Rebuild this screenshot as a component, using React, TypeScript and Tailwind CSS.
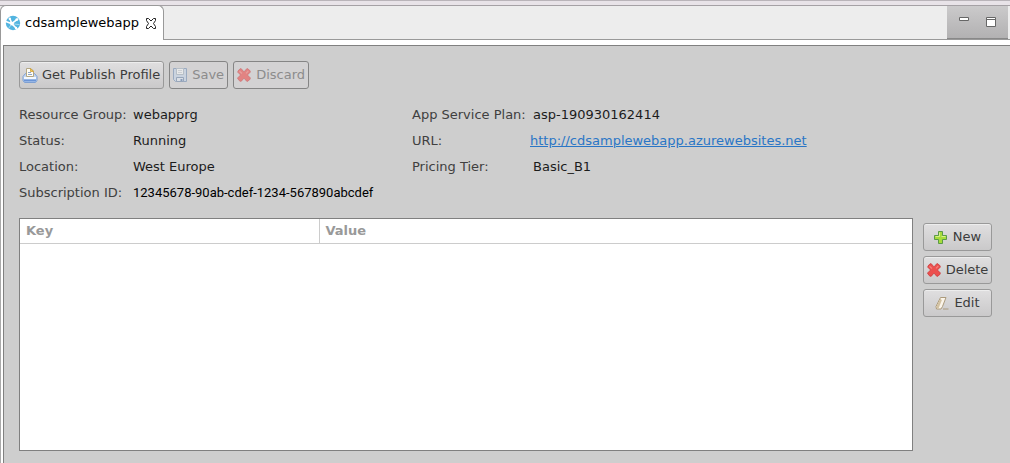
import React from 'react';

const AzureIcon = () => (
  <svg width="16" height="16" viewBox="0 0 16 16" aria-hidden="true">
    <circle cx="8" cy="8" r="7.2" fill="#52b4e0" />
    <path d="M4.800 3.500L6.800 8.500L13 3.800M.8 6.500L6.800 8.800L12 14" stroke="#fff" strokeWidth="1.600" fill="none" />
    <path d="M6.600 9L3.500 13.500M7 8.800L14.500 9.600" stroke="#c9e8f5" strokeWidth=".7" fill="none" />
    <circle cx="7" cy="8.600" r="1.900" fill="#fff" />
    <circle cx="4.800" cy="3.800" r="1.200" fill="#fff" />
    <circle cx="11.800" cy="4.600" r="1.400" fill="#fff" />
    <circle cx="11" cy="13" r="1.200" fill="#fff" />
  </svg>
);

const CloseIcon = () => (
  <svg width="12" height="11" viewBox="0 0 12 11" aria-hidden="true">
    <path d="M1.500 .5h2L6 3 8.500 .5h2v2L8.500 5.500l2 3v2h-2L6 8l-2.500 2.500h-2v-2L3.500 5.500l-2-3z" fill="#fff" stroke="#222" />
  </svg>
);

const PrinterIcon = () => (
  <svg width="16" height="16" viewBox="0 0 16 16" aria-hidden="true">
    <path d="M3.500 6.500h9l2.500 3v4l-1.500 2h-11L1 13.500v-4z" fill="#c3d7f3" stroke="#7fa0d2" />
    <path d="M4.500 9.500v-8h4.500l2.500 2.500v5.500z" fill="#fffdf5" stroke="#b3a784" />
    <path d="M8.500 1.500v3h3z" fill="#f0c95c" stroke="#d0a23a" strokeWidth=".8" />
    <path d="M6 5.500h3M6 7.500h4" stroke="#8fa6c9" />
    <path d="M2 10h12v2H2z" fill="#f3f8ff" />
    <path d="M1.800 13.500h12.400" stroke="#6a94d6" strokeWidth="2" />
  </svg>
);

const SaveIcon = () => (
  <svg width="16" height="16" viewBox="0 0 16 16" aria-hidden="true">
    <path d="M1.500 1.500h13v13h-11l-2-2z" fill="#c5d5e8" stroke="#7590b4" />
    <path d="M4.500 1.500h7v6h-7z" fill="#f5f7f8" stroke="#a4b2bf" />
    <path d="M6 3.500h4M6 5.500h4" stroke="#c9ced3" />
    <path d="M4.500 14.500v-4h7v4z" fill="#e1e9f2" stroke="#7189aa" />
    <path d="M8.500 12h2v2h-2z" fill="#5979a9" />
  </svg>
);

const CrossIcon = () => (
  <svg width="16" height="16" viewBox="0 0 16 16" aria-hidden="true">
    <path d="M2 4l2-2.200h1.300L8 4.900l2.700-3.100H12L14.200 4v1.200L11.400 8l2.800 2.800V12L12 14.200h-1.300L8 11.100l-2.700 3.100H4L1.800 12v-1.200L4.600 8 1.800 5.200z" fill="#ec4f4e" stroke="#cc3a3b" strokeWidth=".8" strokeLinejoin="round" />
    <path d="M3.500 4.200L6 6.500M12.300 4L10 6.400" stroke="#f57f79" strokeWidth="1.200" />
  </svg>
);

const PlusIcon = () => (
  <svg width="16" height="16" viewBox="0 0 16 16" aria-hidden="true">
    <path d="M5.500 2.500h4v4h4v4h-4v4h-4v-4h-4v-4h4z" fill="#a6dc3a" stroke="#5b9a48" />
    <path d="M6.500 3.500v4h-4M8.500 7.500h4" stroke="#d9f08a" fill="none" />
  </svg>
);

const EraserIcon = () => (
  <svg width="16" height="16" viewBox="0 0 16 16" aria-hidden="true">
    <path d="M6.500 2.500h5.500l-3.500 9-1.500 2.500H2.500l-.5-2.500z" fill="#fbf5ea" stroke="#ab9a7c" />
    <path d="M2.500 11.500l4-8.500 1.200 2.500-3.200 8H3z" fill="#d3c2a2" />
    <path d="M9 14h5.500" stroke="#ab9a7c" />
  </svg>
);

type ButtonProps = {
  icon: React.ReactNode;
  label: string;
  disabled?: boolean;
};

const ToolButton: React.FC<ButtonProps> = ({ icon, label, disabled }) => (
  <button
    type="button"
    disabled={disabled}
    className="flex h-7 items-center justify-center gap-1 rounded-[3px] border border-[#999] bg-linear-to-b from-[#e0dfe0] to-[#cac9ca] pr-[3px] pl-0.5 text-[#3c3c3c] inset-shadow-[0_1px_0_#ededed] disabled:border-[#858585] disabled:bg-[#d3d2d3] disabled:bg-none disabled:text-[#8c8c8c] disabled:inset-shadow-none"
  >
    <span className={disabled ? 'opacity-60' : ''}>{icon}</span>
    <span className="whitespace-nowrap">{label}</span>
  </button>
);

const LEFT_FIELDS = [
  { label: 'Resource Group:', value: 'webapprg' },
  { label: 'Status:', value: 'Running' },
  { label: 'Location:', value: 'West Europe' },
];

export default function App() {
  return (
    <div className="flex min-h-screen flex-col bg-white font-['DejaVu_Sans',sans-serif] text-[13px] leading-4 text-[#1c1c1c]">
      <div className="h-1.5 border-t border-b border-t-[#b9b4b9] border-b-[#a5a1a5] bg-[#e8e3e8]" />

      <header className="flex h-[34px] bg-[#ededed]">
        <div className="-mt-px flex items-center gap-1 rounded-t-md border border-b-0 border-[#999] bg-white pr-1.5 pl-1 text-black">
          <AzureIcon />
          <span>cdsamplewebapp</span>
          <button type="button" aria-label="Close" className="ml-0.5">
            <CloseIcon />
          </button>
        </div>
        <div className="flex flex-1 justify-end border-b border-[#999]">
          <div className="mr-0.5 flex w-[61px] items-start justify-between border-b border-[#888] bg-linear-to-b from-[#cbcacb] to-[#b2b1b2] px-3 pt-2.5">
            <button type="button" aria-label="Minimize">
              <svg width="10" height="11" viewBox="0 0 10 11">
                <path d="M.5 1.500h9v3h-9z" fill="#fff" stroke="#666" />
              </svg>
            </button>
            <button type="button" aria-label="Maximize">
              <svg width="10" height="11" viewBox="0 0 10 11">
                <path d="M.5 1.500h9v9h-9zM.5 3.500h9" fill="#fff" stroke="#666" />
              </svg>
            </button>
          </div>
        </div>
      </header>

      <div className="flex flex-1 border-l border-[#aaa] pt-[5px] pl-0.5">
        <main className="flex flex-1 flex-col border-t border-l border-[#808080] bg-[#cecece] pt-[15px] pr-[18px] pb-3 pl-[15px]">
          <div className="flex gap-[5px]">
            <ToolButton icon={<PrinterIcon />} label="Get Publish Profile" />
            <ToolButton icon={<SaveIcon />} label="Save" disabled />
            <ToolButton icon={<CrossIcon />} label="Discard" disabled />
          </div>

          <div className="mt-[13px] mb-3 flex">
            <dl className="grid w-[393px] auto-rows-[26px] grid-cols-[114px_1fr] items-center">
              {LEFT_FIELDS.map((field) => (
                <React.Fragment key={field.label}>
                  <dt className="text-[#404040]">{field.label}</dt>
                  <dd>{field.value}</dd>
                </React.Fragment>
              ))}
              <dt className="text-[#404040]">Subscription ID:</dt>
              <dd className="font-['Roboto',sans-serif] text-black">12345678-90ab-cdef-1234-567890abcdef</dd>
            </dl>
            <dl className="grid auto-rows-[26px] grid-cols-[118px_1fr] items-center">
              <dt className="text-[#404040]">App Service Plan:</dt>
              <dd className="pl-[3px]">asp-190930162414</dd>
              <dt className="text-[#404040]">URL:</dt>
              <dd>
                <a href="http://cdsamplewebapp.azurewebsites.net" className="text-[#2a76c6] underline">
                  http://cdsamplewebapp.azurewebsites.net
                </a>
              </dd>
              <dt className="text-[#404040]">Pricing Tier:</dt>
              <dd className="pl-[3px]">Basic_B1</dd>
            </dl>
          </div>

          <div className="flex flex-1 gap-2.5">
            <div className="flex-1 border border-[#808080] bg-white">
              <table className="w-full table-fixed border-collapse text-left text-[#999]">
                <thead>
                  <tr className="h-6 border-b border-[#ccc]">
                    <th className="w-[299px] border-r border-[#ccc] px-1.5">Key</th>
                    <th className="px-1.5">Value</th>
                  </tr>
                </thead>
                <tbody />
              </table>
            </div>
            <div className="flex w-[69px] flex-col gap-[5px] pt-[5px]">
              <ToolButton icon={<PlusIcon />} label="New" />
              <ToolButton icon={<CrossIcon />} label="Delete" />
              <ToolButton icon={<EraserIcon />} label="Edit" />
            </div>
          </div>
        </main>
      </div>
    </div>
  );
}
